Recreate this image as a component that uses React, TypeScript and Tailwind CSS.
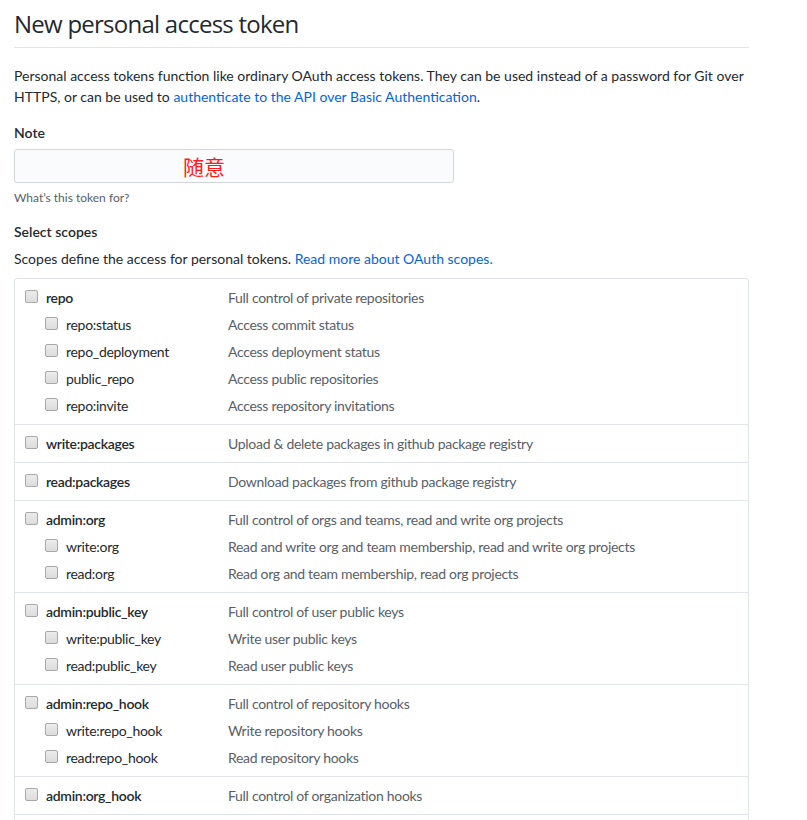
import React from "react";

interface Scope {
  name: string;
  desc: string;
  subs?: { name: string; desc: string }[];
}

const scopes: Scope[] = [
  {
    name: "repo",
    desc: "Full control of private repositories",
    subs: [
      { name: "repo:status", desc: "Access commit status" },
      { name: "repo_deployment", desc: "Access deployment status" },
      { name: "public_repo", desc: "Access public repositories" },
      { name: "repo:invite", desc: "Access repository invitations" },
    ],
  },
  { name: "write:packages", desc: "Upload & delete packages in github package registry" },
  { name: "read:packages", desc: "Download packages from github package registry" },
  {
    name: "admin:org",
    desc: "Full control of orgs and teams, read and write org projects",
    subs: [
      { name: "write:org", desc: "Read and write org and team membership, read and write org projects" },
      { name: "read:org", desc: "Read org and team membership, read org projects" },
    ],
  },
  {
    name: "admin:public_key",
    desc: "Full control of user public keys",
    subs: [
      { name: "write:public_key", desc: "Write user public keys" },
      { name: "read:public_key", desc: "Read user public keys" },
    ],
  },
  {
    name: "admin:repo_hook",
    desc: "Full control of repository hooks",
    subs: [
      { name: "write:repo_hook", desc: "Write repository hooks" },
      { name: "read:repo_hook", desc: "Read repository hooks" },
    ],
  },
  { name: "admin:org_hook", desc: "Full control of organization hooks" },
  { name: "gist", desc: "Create gists" },
  { name: "notifications", desc: "Access notifications" },
];

function Checkbox() {
  return (
    <span className="-mt-[3px] inline-block h-[13px] w-[13px] shrink-0 rounded-[2px] border border-[#a8a8a8] bg-gradient-to-b from-[#ececec] to-[#dcdcdc]" />
  );
}

function Row({ name, desc, sub }: { name: string; desc: string; sub?: boolean }) {
  return (
    <div className="flex h-[27px] items-center tracking-[-0.3px]">
      <div className={`flex w-[203px] shrink-0 items-center gap-2 ${sub ? "pl-5" : ""}`}>
        <Checkbox />
        <span className={sub ? "text-[#24292e]" : "font-semibold text-[#24292e]"}>{name}</span>
      </div>
      <span className="text-[#586069]">{desc}</span>
    </div>
  );
}

export default function App() {
  return (
    <div
      className="min-h-screen bg-white pl-[14px] text-[14px] leading-[21px] text-[#24292e]"
      style={{ fontFamily: 'Lato, "Noto Sans CJK SC", sans-serif' }}
    >
      <div className="w-[735px]">
        <div className="border-b border-[#e1e4e8] pt-[9px] pb-2">
          <h1
            className="text-[24px] font-normal leading-[30px] tracking-[-0.75px]"
            style={{ fontFamily: '"Open Sans", sans-serif' }}
          >
            New personal access token
          </h1>
        </div>

        <p className="mt-[17px]">
          Personal access tokens function like ordinary OAuth access tokens. They can be used instead of a password for Git over HTTPS, or can be used to{" "}
          <a className="text-[#0366d6]">authenticate to the API over Basic Authentication</a>.
        </p>

        <div className="mt-[15px] font-semibold">Note</div>
        <div className="mt-[6px] flex h-[34px] w-[440px] items-center rounded-[3px] border border-[#d1d5da] bg-[#fafbfc] pl-[168px]">
          <span className="text-[21px] leading-none text-[#ff1a1a]" style={{ fontFamily: '"Noto Sans CJK SC", sans-serif' }}>
            随意
          </span>
        </div>
        <p className="mt-[6px] text-[12px] leading-[18px] text-[#586069]">What’s this token for?</p>

        <div className="mt-[14px] font-semibold">Select scopes</div>
        <p className="mt-[6px]">
          Scopes define the access for personal tokens. <a className="text-[#0366d6]">Read more about OAuth scopes.</a>
        </p>

        <div className="mt-[9px] rounded-[3px] border border-[#e1e4e8]">
          {scopes.map((s, i) => (
            <div key={s.name} className={`py-[5px] pl-[10px] ${i > 0 ? "border-t border-[#e1e4e8]" : ""}`}>
              <Row name={s.name} desc={s.desc} />
              {s.subs?.map((c) => (
                <Row key={c.name} name={c.name} desc={c.desc} sub />
              ))}
            </div>
          ))}
        </div>
      </div>
    </div>
  );
}
